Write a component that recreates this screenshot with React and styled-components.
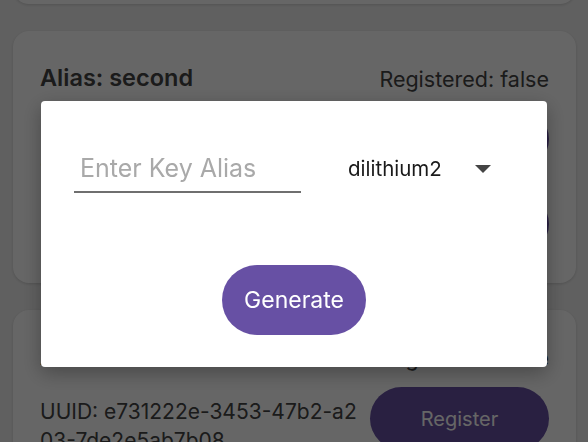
import React from "react";
import styled, { createGlobalStyle } from "styled-components";

const Global = createGlobalStyle`
  html, body { margin: 0; padding: 0; }
  body {
    background: #f0f0f0;
    font-family: Inter, "Noto Sans", sans-serif;
    color: #3a3a3a;
    overflow: hidden;
    height: 442px;
  }
`;

const Page = styled.div`
  display: flex;
  flex-direction: column;
  gap: 27px;
  padding: 0 12px 0 13px;
  margin-top: -248px;
`;

const Card = styled.div`
  background: #ffffff;
  border-radius: 16px;
  padding: 32px 27px 28px 27px;
  height: ${(p) => p.$h || "auto"};
  box-sizing: border-box;
  display: flex;
  flex-direction: column;
  gap: 17px;
  box-shadow: 0 1px 3px rgba(0, 0, 0, 0.15);
`;

const Header = styled.div`
  display: flex;
  justify-content: space-between;
  align-items: baseline;
  height: 28px;
`;

const Alias = styled.div`
  font-size: 23.5px;
  font-weight: 600;
  color: #444;
`;

const Registered = styled.div`
  font-size: 21.5px;
  color: #444;
  position: relative;
  top: 1px;
`;

const Row = styled.div`
  display: flex;
  align-items: flex-start;
  gap: 8px;
`;

const Uuid = styled.div`
  flex: 1;
  font-size: 21px;
  line-height: 29px;
  padding-top: 10px;
  color: #444;
  word-break: break-all;
`;

const PillButton = styled.button`
  border: none;
  background: #6750a4;
  color: #ffffff;
  border-radius: 999px;
  font-family: inherit;
  font-size: ${(p) => p.$fs || "20px"};
  height: ${(p) => p.$h || "63px"};
  width: ${(p) => p.$w || "179px"};
  flex-shrink: 0;
  padding: 0;
  cursor: pointer;
`;

const Overlay = styled.div`
  position: fixed;
  inset: 0;
  background: rgba(0, 0, 0, 0.6);
  display: flex;
  justify-content: center;
  align-items: flex-start;
  padding-top: 101px;
`;

const Dialog = styled.div`
  width: 506px;
  height: 266px;
  box-sizing: border-box;
  background: #ffffff;
  border-radius: 4px;
  box-shadow: 0 6px 20px rgba(0, 0, 0, 0.3);
  padding: 52px 33px 32px 33px;
  display: flex;
  flex-direction: column;
  justify-content: space-between;
  align-items: center;
`;

const FormRow = styled.div`
  align-self: stretch;
  display: flex;
  align-items: flex-end;
  gap: 47px;
`;

const AliasInput = styled.input`
  width: 227px;
  box-sizing: border-box;
  border: none;
  border-bottom: 2px solid #6f6f6f;
  outline: none;
  font-family: inherit;
  font-size: 25px;
  padding: 0 6px 8px;
  color: #333;
  background: transparent;
  &::placeholder {
    color: #a9a9a9;
  }
`;

const Select = styled.div`
  display: flex;
  align-items: center;
  gap: 33px;
  padding-bottom: 12px;
  font-size: 20.5px;
  color: #1a1a1a;
`;

const Caret = styled.span`
  width: 0;
  height: 0;
  border-left: 8px solid transparent;
  border-right: 8px solid transparent;
  border-top: 8px solid #444;
`;

export default function App() {
  return (
    <>
      <Global />
      <Page>
        <Card $h="252px" />
        <Card $h="252px">
          <Header>
            <Alias>Alias: second</Alias>
            <Registered>Registered: false</Registered>
          </Header>
          <Row>
            <Uuid>UUID: 4c1a9e07-6b2d-4f3e-9a81-2d5f7c0e4b19</Uuid>
            <PillButton $h="62px">Register</PillButton>
          </Row>
          <Row>
            <Uuid />
            <PillButton $h="62px">Delete</PillButton>
          </Row>
        </Card>
        <Card>
          <Header>
            <Alias>Alias: third</Alias>
            <Registered>Registered: false</Registered>
          </Header>
          <Row>
            <Uuid>UUID: e731222e-3453-47b2-a203-7de2e5ab7b08</Uuid>
            <PillButton>Register</PillButton>
          </Row>
        </Card>
      </Page>
      <Overlay>
        <Dialog>
          <FormRow>
            <AliasInput placeholder="Enter Key Alias" />
            <Select>
              dilithium2
              <Caret />
            </Select>
          </FormRow>
          <PillButton $w="144px" $h="70px" $fs="23px">
            Generate
          </PillButton>
        </Dialog>
      </Overlay>
    </>
  );
}
